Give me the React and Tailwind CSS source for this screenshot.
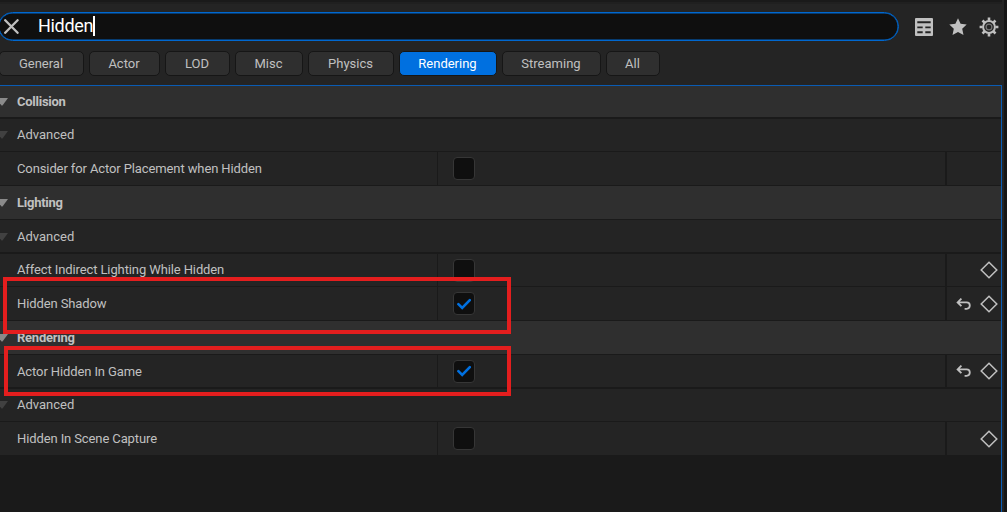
import React from 'react'
import clsx from 'clsx'

const tabs = [
  { label: 'General', width: 'w-[85px]' },
  { label: 'Actor', width: 'w-[71px]' },
  { label: 'LOD', width: 'w-[65px]' },
  { label: 'Misc', width: 'w-[68px]' },
  { label: 'Physics', width: 'w-[86px]' },
  { label: 'Rendering', width: 'w-[98px]', active: true },
  { label: 'Streaming', width: 'w-[99px]' },
  { label: 'All', width: 'w-[54px]' },
]

// h is the full row height, separator included
const rows = [
  { type: 'category', label: 'Collision', h: 'h-[33px]', thick: true },
  { type: 'advanced', label: 'Advanced', h: 'h-[33px]' },
  { type: 'property', label: 'Consider for Actor Placement when Hidden', h: 'h-[34px]' },
  { type: 'category', label: 'Lighting', h: 'h-[34px]' },
  { type: 'advanced', label: 'Advanced', h: 'h-[34px]', thick: true, nudge: true },
  { type: 'property', label: 'Affect Indirect Lighting While Hidden', h: 'h-[33px]', keyable: true },
  { type: 'property', label: 'Hidden Shadow', h: 'h-[34px]', keyable: true, checked: true },
  { type: 'category', label: 'Rendering', h: 'h-[34px]' },
  { type: 'property', label: 'Actor Hidden In Game', h: 'h-[34px]', keyable: true, checked: true, thick: true, nudge: true },
  { type: 'advanced', label: 'Advanced', h: 'h-[33px]' },
  { type: 'property', label: 'Hidden In Scene Capture', h: 'h-[34px]', keyable: true },
]

const TableIcon = () => (
  <svg width="18" height="18" viewBox="0 0 18 18" className="shrink-0">
    <rect width="18" height="18" rx="1" fill="#c0c0c0" />
    <path
      d="M2.300 3.200h13.400v2H2.300zM2.300 8.400h5.400v1.900H2.300zM10.300 8.400h5.400v1.900h-5.400zM2.300 13.300h5.400v1.900H2.300zM10.300 13.300h5.400v1.900h-5.400z"
      fill="#242424"
    />
  </svg>
)

const StarIcon = () => (
  <svg width="18" height="18" viewBox="0 0 18 18" className="shrink-0">
    <path d="M9 .2l2.600 5.600 6.100.7-4.500 4.200 1.300 6.400L9 14 3.500 17.100l1.300-6.400L.3 6.500l6.100-.7z" fill="#c0c0c0" />
  </svg>
)

const GearIcon = () => (
  <svg width="20" height="20" viewBox="0 0 20 20" className="shrink-0" stroke="#c0c0c0" fill="none">
    <circle cx="10" cy="10" r="5.900" strokeWidth="2" />
    <circle cx="10" cy="10" r="2.900" strokeWidth="1.200" stroke="#777777" />
    <path
      d="M10 .6v3M10 16.400v3M.6 10h3M16.400 10h3M3.500 3.500l2.100 2.100M14.400 14.400l2.100 2.100M3.500 16.500l2.100-2.100M14.400 5.600l2.100-2.100"
      strokeWidth="2.600"
    />
  </svg>
)

const ResetIcon = () => (
  <svg width="15" height="12" viewBox="0 0 15 12" fill="none" stroke="#c0c0c0" strokeWidth="1.8">
    <path d="M5.400 .6L1.600 4.400L5.400 8.200M1.800 4.400H10.600a3.200 3.200 0 0 1 0 6.400H8.600" />
  </svg>
)

const DiamondIcon = () => (
  <svg width="18" height="18" viewBox="0 0 18 18" fill="none" stroke="#c0c0c0" strokeWidth="1.5">
    <path d="M9 1.200L16.800 9L9 16.800L1.200 9z" />
  </svg>
)

const Expander = ({ dim }) => (
  <svg width="8" height="8" viewBox="0 0 8 8" className="shrink-0">
    <path d="M-4 0H8L2.500 7.500H1.500z" fill={dim ? '#414141' : '#8a8a8a'} />
  </svg>
)

const Checkbox = ({ checked }) => (
  <div className="flex h-[23px] w-[22px] items-center justify-center rounded-[4px] border border-[#363636] bg-[#0f0f0f]">
    {checked && (
      <svg width="14" height="12" viewBox="0 0 14 12" fill="none" stroke="#0070e0" strokeWidth="2.6">
        <path d="M1.400 6.200L5.200 10L12.800 2.200" strokeLinecap="round" />
      </svg>
    )}
  </div>
)

const Row = ({ row }) => {
  const border = row.thick ? 'border-b-2' : 'border-b'

  if (row.type !== 'property') {
    const category = row.type === 'category'
    return (
      <div
        className={clsx(
          'flex items-center gap-[9px] border-[#1a1a1a]',
          row.h,
          border,
          row.nudge && 'pt-px',
          category ? 'bg-[#2f2f2f] font-bold tracking-[-0.25px]' : 'bg-[#242424]'
        )}
      >
        <Expander dim={!category} />
        <span>{row.label}</span>
      </div>
    )
  }

  return (
    <div className={clsx('flex border-[#1a1a1a] bg-[#242424]', row.h, border)}>
      <div
        className={clsx(
          'flex w-[438px] items-center border-r border-[#1a1a1a] pl-[17px] tracking-[-0.11px]',
          row.nudge && 'pt-px'
        )}
      >
        {row.label}
      </div>
      <div className="flex flex-1 items-center pl-[15px]">
        <Checkbox checked={row.checked} />
      </div>
      <div className="flex w-[56px] items-center justify-end gap-[9px] border-l-2 border-[#1a1a1a] pr-[3px]">
        {row.checked && <ResetIcon />}
        {row.keyable && <DiamondIcon />}
      </div>
    </div>
  )
}

const Toolbar = () => (
  <div className="ml-[16px] flex items-center">
    <TableIcon />
    <div className="ml-[16px] flex">
      <StarIcon />
    </div>
    <div className="ml-[12px] flex">
      <GearIcon />
    </div>
  </div>
)

const App = () => {
  return (
    <div className="relative flex h-[512px] w-[1007px] overflow-hidden bg-[#242424] font-['Roboto',sans-serif] text-[13px] leading-4 text-[#c0c0c0]">
      <div className="flex w-[1004px] flex-col">
        <div className="h-[4px] w-[1002px] shrink-0 border-b-2 border-[#202020] bg-[#1a1a1a]" />

        {/* Search bar */}
        <div className="mt-2 flex h-[29px] shrink-0 items-center">
          <div className="-ml-[2px] flex h-[29px] w-[901px] items-center rounded-full border border-[#0068d0] bg-[#0f0f0f] pl-[5px] shadow-[inset_0_0_0_0.5px_#0068d0]">
            <svg width="15" height="15" viewBox="0 0 15 15" stroke="#c0c0c0" strokeWidth="2.3" strokeLinecap="round">
              <path d="M1.200 1.200L13.600 13.800M13.600 1.200L1.200 13.800" />
            </svg>
            <div className="ml-[19px] flex items-center pb-px">
              <span className="text-[18px] leading-5 tracking-[-0.3px] text-white">Hidden</span>
              <span className="h-[20px] w-[2px] bg-white" />
            </div>
          </div>
          <Toolbar />
        </div>

        {/* Section filters */}
        <div className="mt-[10px] -ml-px flex shrink-0 gap-[5px]">
          {tabs.map((tab) => (
            <div
              key={tab.label}
              className={clsx(
                'flex h-[25px] items-center justify-center rounded-[5px] border border-[#161616] pr-px',
                tab.width,
                tab.active ? 'bg-[#0070e0] text-white' : 'bg-[#2f2f2f]'
              )}
            >
              {tab.label}
            </div>
          ))}
        </div>

        {/* Details list */}
        <div className="mt-[9px] flex w-[1002px] flex-1 bg-[#0a5cb4] pt-px pr-px">
          <div className="flex-1 bg-[#1a1a1a]">
            {rows.map((row, i) => (
              <Row key={i} row={row} />
            ))}
          </div>
        </div>
      </div>
      <div className="w-[3px] bg-[#151515]" />

      {/* Highlights */}
      <div className="absolute top-[277px] left-[3px] h-[57px] w-[508px] border-4 border-[#e41e1e]" />
      <div className="absolute top-[346px] left-[4px] h-[50px] w-[507px] border-4 border-[#e41e1e]" />
    </div>
  )
}

export default App
